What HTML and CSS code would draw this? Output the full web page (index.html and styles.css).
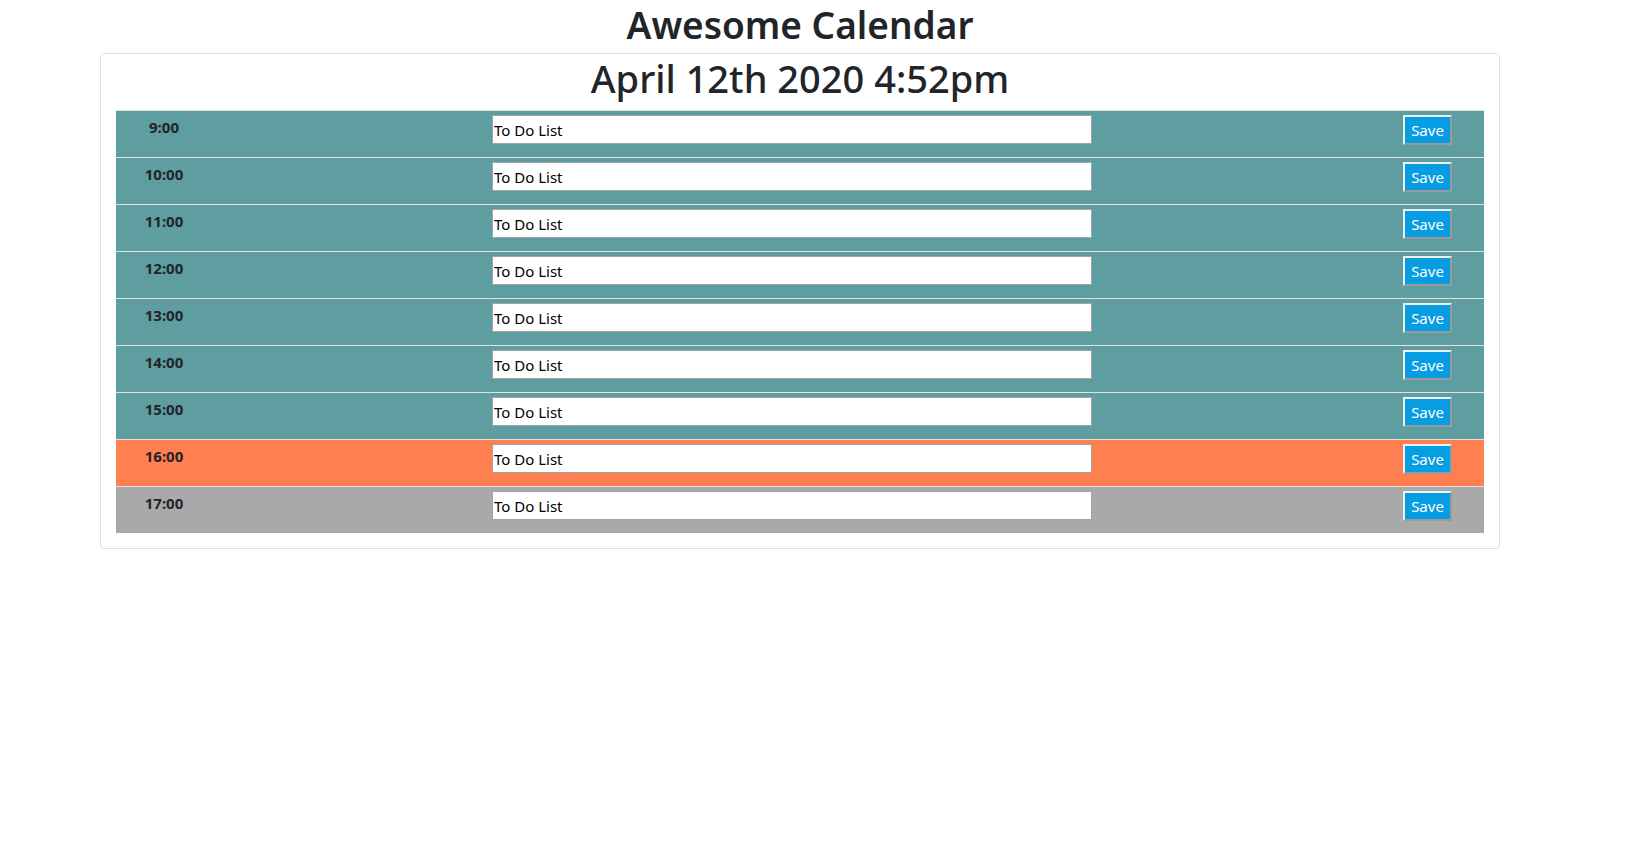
FILE: index.html
```html
<!DOCTYPE html>
<html lang="en">
<head>
<meta charset="utf-8">
<title>Awesome Calendar</title>
<link rel="stylesheet" href="styles.css">
</head>
<body>
<div class="page">
  <h1 class="site-title">Awesome Calendar</h1>
  <div class="card">
    <h2 class="today">April 12th 2020 4:52pm</h2>
    <div class="slot past"><div class="hour">9:00</div><input class="task" type="text" value="To Do List"><button class="save">Save</button></div>
    <div class="slot past"><div class="hour">10:00</div><input class="task" type="text" value="To Do List"><button class="save">Save</button></div>
    <div class="slot past"><div class="hour">11:00</div><input class="task" type="text" value="To Do List"><button class="save">Save</button></div>
    <div class="slot past"><div class="hour">12:00</div><input class="task" type="text" value="To Do List"><button class="save">Save</button></div>
    <div class="slot past"><div class="hour">13:00</div><input class="task" type="text" value="To Do List"><button class="save">Save</button></div>
    <div class="slot past"><div class="hour">14:00</div><input class="task" type="text" value="To Do List"><button class="save">Save</button></div>
    <div class="slot past"><div class="hour">15:00</div><input class="task" type="text" value="To Do List"><button class="save">Save</button></div>
    <div class="slot present"><div class="hour">16:00</div><input class="task" type="text" value="To Do List"><button class="save">Save</button></div>
    <div class="slot future"><div class="hour">17:00</div><input class="task" type="text" value="To Do List"><button class="save">Save</button></div>
  </div>
</div>
</body>
</html>
```

FILE: styles.css
```css
html, body {
  margin: 0;
  padding: 0;
  background: #ffffff;
}

body {
  font-family: "Noto Sans", "Open Sans", sans-serif;
  color: #212529;
}

.page {
  width: 1600px;
}

.site-title {
  margin: 0 0 4px;
  font-size: 37px;
  font-weight: 600;
  line-height: 49px;
  text-align: center;
}

.card {
  width: 1368px;
  margin: 0 auto;
  padding: 0 15px 15px;
  border: 1px solid #dfdfdf;
  border-radius: 4px;
}

.today {
  margin: 0 0 8px;
  font-size: 38px;
  font-weight: 500;
  line-height: 48px;
  text-align: center;
}

.slot {
  display: flex;
  align-items: flex-start;
  height: 42px;
  padding: 4px 32px 0 0;
  border-top: 1px solid #e2e2e2;
}

.past { background: #5f9ea0; }
.present { background: #ff7f50; }
.future { background: #a9a9a9; }

.hour {
  width: 96px;
  font-size: 15px;
  font-weight: 700;
  line-height: 24px;
  text-align: center;
}

.task {
  width: 600px;
  height: 29px;
  margin-left: 280px;
  padding: 0 1px;
  box-sizing: border-box;
  border: 1px solid #a3a3a3;
  background: #ffffff;
  font-family: "Noto Sans", "Open Sans", sans-serif;
  font-size: 15px;
  color: #000000;
}

.save {
  margin-left: auto;
  width: 49px;
  height: 30px;
  padding: 0;
  border: 2px solid;
  border-color: #f0f0f0 #9a9a9a #9a9a9a #f0f0f0;
  background: #069de2;
  color: #ffffff;
  font-family: "Noto Sans", "Open Sans", sans-serif;
  font-size: 15px;
  line-height: 24px;
}
```
